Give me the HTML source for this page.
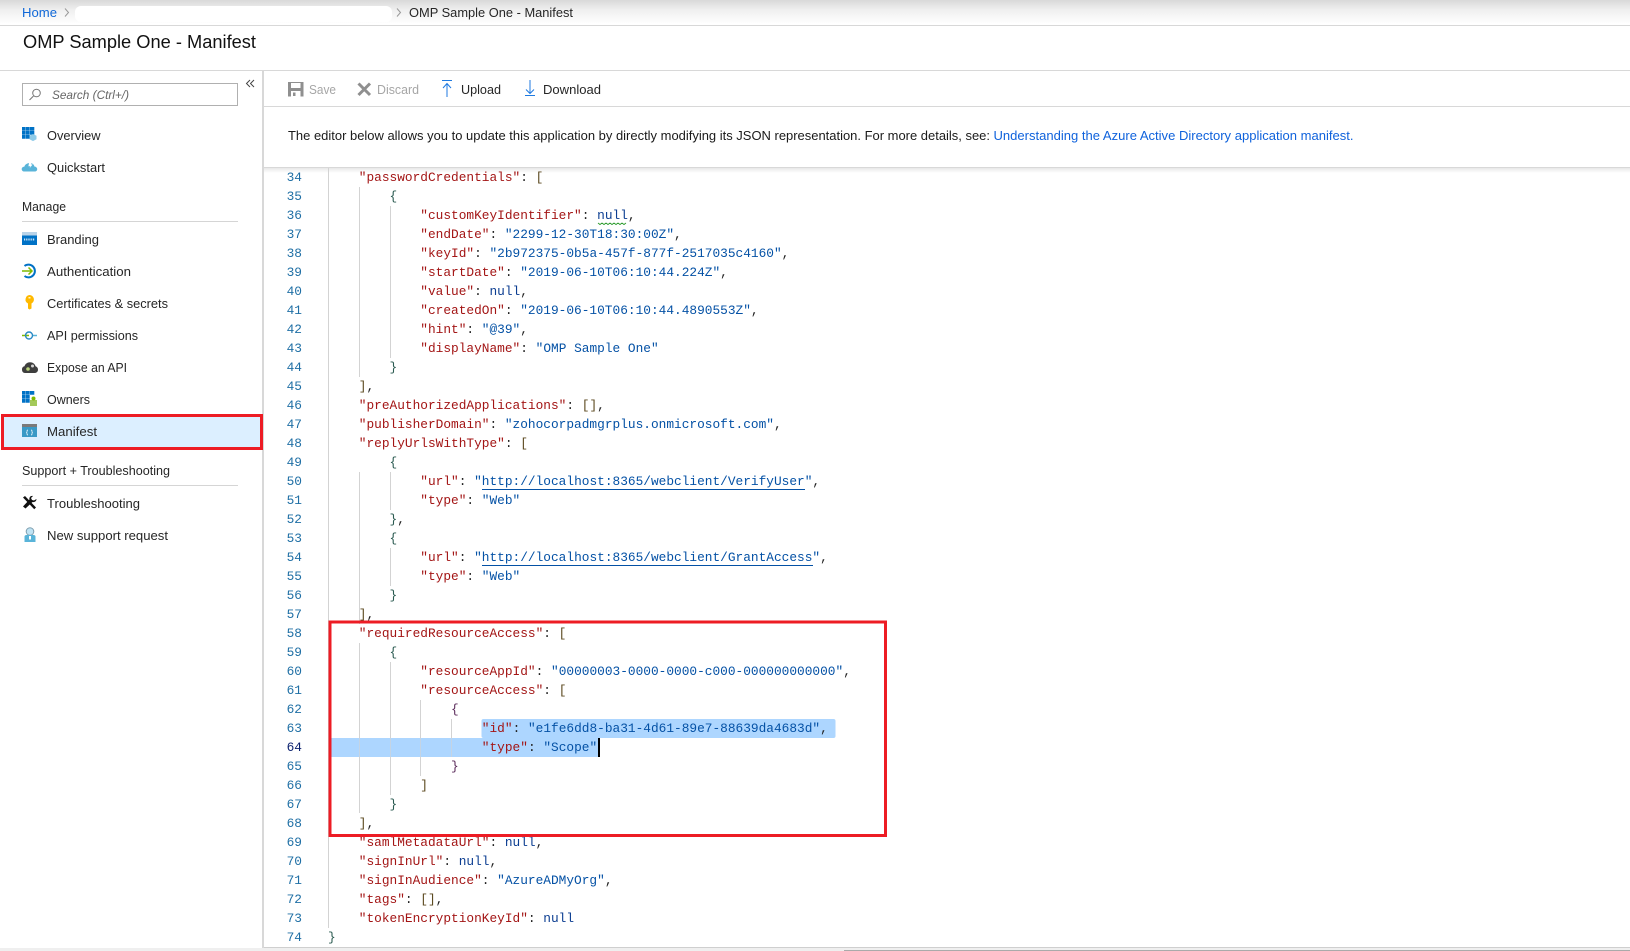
<!DOCTYPE html>
<html lang="en">
<head>
<meta charset="utf-8">
<title>OMP Sample One - Manifest</title>
<style>
html,body{margin:0;padding:0;background:#fff;width:1630px;height:951px;overflow:hidden}
svg{display:block}
.u{font-family:"Liberation Sans",sans-serif;font-size:13px;fill:#262626}
.m{font-family:"Liberation Mono",monospace;font-size:12.82px;fill:#222}
.ln{font-family:"Liberation Mono",monospace;font-size:12.82px;fill:#1f6fa5;text-anchor:end}
.k{fill:#a31515}.s{fill:#0451a5}.n{fill:#0b3d91}
.b1{fill:#5c4a20}.b2{fill:#2a5a50}.b3{fill:#5a2a5a}
</style>
</head>
<body>
<svg xmlns="http://www.w3.org/2000/svg" width="1630" height="951" viewBox="0 0 1630 951">
<defs>
<linearGradient id="tg" x1="0" y1="0" x2="0" y2="1"><stop offset="0" stop-color="#d9d9d9"/><stop offset=".4" stop-color="#efefef"/><stop offset="1" stop-color="#fff"/></linearGradient>
<linearGradient id="sh" x1="0" y1="0" x2="0" y2="1"><stop offset="0" stop-color="#e8e8e8"/><stop offset="1" stop-color="#fff"/></linearGradient>
</defs>
<rect width="1630" height="951" fill="#fff"/>
<!-- top bar -->
<rect width="1630" height="24" fill="url(#tg)"/>
<rect x="0" y="25" width="1630" height="1" fill="#d8d8d8"/>
<rect x="75" y="6" width="317" height="16" rx="6" fill="#fff"/>
<text class="u" x="22" y="17" textLength="35" lengthAdjust="spacingAndGlyphs" style="fill:#1068d8">Home</text>
<path d="M65 8.500l3.500 4-3.500 4" fill="none" stroke="#999" stroke-width="1"/>
<path d="M397 8.500l3.500 4-3.500 4" fill="none" stroke="#999" stroke-width="1"/>
<text class="u" x="409" y="17" textLength="164" lengthAdjust="spacingAndGlyphs">OMP Sample One - Manifest</text>
<text x="23" y="48" textLength="233" lengthAdjust="spacingAndGlyphs" style="font-family:'Liberation Sans',sans-serif;font-size:18px;fill:#111">OMP Sample One - Manifest</text>
<rect x="0" y="70" width="1630" height="1" fill="#d8d8d8"/>
<!-- sidebar -->
<rect x="262" y="70" width="2" height="881" fill="#d8d8d8"/>
<rect x="22.500" y="83.500" width="215" height="22" fill="#fff" stroke="#b0b0b0"/>
<circle cx="36.500" cy="93" r="3.800" fill="none" stroke="#777" stroke-width="1"/>
<path d="M33.500 96l-4 4" stroke="#777" stroke-width="1.100"/>
<text class="u" x="52" y="99" textLength="77" lengthAdjust="spacingAndGlyphs" style="font-style:italic;font-size:12px;fill:#666">Search (Ctrl+/)</text>
<path d="M250 80l-3.500 3.500 3.500 3.500M254 80l-3.500 3.500 3.500 3.500" fill="none" stroke="#444" stroke-width="1"/>
<!-- overview icon -->
<path d="M22 127h3.700v3.700h-3.700zM26 127h3.700v3.700h-3.700zM30 127h4.300v3.700h-4.300zM22 131h3.700v3.700h-3.700zM26 131h3.700v3.700h-3.700zM30 131h4.300v3.700h-4.300zM22 135h3.700v3.700h-3.700zM26 135h3.700v3.700h-3.700z" fill="#0072c6"/>
<path d="M33 134l3.500 1.800v3.500l-3.500 1.800-3.500-1.800v-3.500z" fill="#8fcbe8"/>
<text class="u" x="47" y="140" textLength="53.500" lengthAdjust="spacingAndGlyphs">Overview</text>
<!-- quickstart -->
<path d="M24.500 171.500c-2 0-2.800-1.200-2.800-2.400 0-1.400 1.100-2.400 2.600-2.400.6-2 2.400-3.300 4.700-3.700l-.6 3.300h2l-.8 2 3-3.800-1.800-.2.600-1c1.800.4 2.700 1.800 3 3.200 1.600.2 2.800 1.200 2.800 2.700 0 1.300-1 2.300-2.500 2.300z" fill="#59b4d9"/>
<text class="u" x="47" y="172" textLength="58" lengthAdjust="spacingAndGlyphs">Quickstart</text>
<text class="u" x="22" y="211" textLength="44" lengthAdjust="spacingAndGlyphs">Manage</text>
<rect x="22" y="221" width="216" height="1" fill="#d5d5d5"/>
<!-- branding -->
<rect x="22" y="232" width="15" height="13" fill="#0072c6"/>
<rect x="22" y="232" width="15" height="3.500" fill="#b9d3e8"/>
<path d="M24 239.500h11" stroke="#d0e6f6" stroke-width="2" stroke-dasharray="1 .8"/>
<text class="u" x="47" y="244" textLength="52" lengthAdjust="spacingAndGlyphs">Branding</text>
<!-- authentication -->
<path d="M24.500 266a6.400 6.400 0 1 1 0 10" fill="none" stroke="#0072c6" stroke-width="2"/>
<path d="M22 271h10M28.500 267.500l3.500 3.500-3.500 3.500" fill="none" stroke="#7fba00" stroke-width="1.500"/>
<text class="u" x="47" y="276" textLength="84" lengthAdjust="spacingAndGlyphs">Authentication</text>
<!-- certificates -->
<path d="M29.500 295a4.500 4.500 0 0 1 2 8.500v5l-2 1-1.500-1v-5a4.500 4.500 0 0 1 1.500-8.500z" fill="#ffb900"/>
<rect x="28.500" y="297" width="2" height="1.500" fill="#fff2c4"/>
<text class="u" x="47" y="308" textLength="121" lengthAdjust="spacingAndGlyphs">Certificates &amp; secrets</text>
<!-- api -->
<path d="M22 335.500h5" stroke="#7fba00" stroke-width="1.500"/>
<path d="M32 335.500h5" stroke="#59b4d9" stroke-width="1.500"/>
<path d="M26 335.500h3" stroke="#7fba00" stroke-width="1.500"/>
<circle cx="29" cy="335.500" r="3.500" fill="none" stroke="#2b8ac6" stroke-width="1.400"/>
<text class="u" x="47" y="340" textLength="91" lengthAdjust="spacingAndGlyphs">API permissions</text>
<!-- expose -->
<path d="M25 373c-2 0-3-1.500-3-3.500 0-1.800 1-3 2.500-3.200.7-2.500 3-4 5.500-4 2.700 0 5 1.700 5.500 4 1.500.5 2.500 1.700 2.500 3.300 0 2-1.500 3.400-3.500 3.400z" fill="#3e3e3e"/>
<circle cx="28" cy="369" r="1.800" fill="#b8d27a"/><circle cx="32.500" cy="366" r="1.500" fill="#d5d5d5"/>
<text class="u" x="47" y="372" textLength="80" lengthAdjust="spacingAndGlyphs">Expose an API</text>
<!-- owners -->
<path d="M22 391h3.700v3.700h-3.700zM26 391h3.700v3.700h-3.700zM30 391h4.300v3.700h-4.300zM22 395h3.700v3.700h-3.700zM26 395h3.700v3.700h-3.700zM22 399h3.700v3.700h-3.700zM26 399h3.700v3.700h-3.700z" fill="#0072c6"/>
<rect x="30" y="400" width="7" height="6" fill="#a4c95a"/>
<circle cx="33.500" cy="398.500" r="2" fill="#7fba00"/>
<text class="u" x="47" y="404" textLength="43" lengthAdjust="spacingAndGlyphs">Owners</text>
<!-- manifest selected -->
<rect x="3" y="416" width="258" height="32" fill="#dcefff"/>
<rect x="22" y="424" width="15" height="13" fill="#3999c6"/>
<rect x="22" y="424" width="15" height="3" fill="#7a7a7a"/>
<path d="M28 430c-1 0-1 .5-1 1v1c0 .5-.5.700-.8.700.3 0 .8.300.8.800v.5c0 .5 0 1 1 1M31 430c1 0 1 .5 1 1v1c0 .5.5.700.8.700-.3 0-.8.300-.8.800v.5c0 .5 0 1-1 1" fill="none" stroke="#fff" stroke-width=".7"/>
<text class="u" x="47" y="436" textLength="50" lengthAdjust="spacingAndGlyphs">Manifest</text>
<rect x="2.500" y="415.500" width="259" height="33" fill="none" stroke="#ed1c24" stroke-width="3"/>
<text class="u" x="22" y="475" textLength="148" lengthAdjust="spacingAndGlyphs">Support + Troubleshooting</text>
<rect x="22" y="485" width="216" height="1" fill="#d5d5d5"/>
<!-- troubleshooting -->
<path d="M23 497.500l2-1.500 11 11.500-1.800 1.700z" fill="#111"/>
<path d="M36.500 499c0 2-2 3.500-4 3l-7 6.500-2.500-2 6.500-7c-.5-2 1-4 3.500-3.500l-2 2 1 2 2 .500z" fill="#111"/>
<text class="u" x="47" y="508" textLength="93" lengthAdjust="spacingAndGlyphs">Troubleshooting</text>
<!-- new support -->
<circle cx="30" cy="531.500" r="3.800" fill="#bfe3f4" stroke="#7f9fb0" stroke-width="1"/>
<path d="M24.500 542v-5.500c0-1 1-1.500 2-1.500h7c1 0 2 .5 2 1.500v5.500z" fill="#59b4d9"/>
<rect x="29" y="536" width="2" height="3.500" fill="#fff"/>
<text class="u" x="47" y="540" textLength="121" lengthAdjust="spacingAndGlyphs">New support request</text>
<!-- toolbar -->
<path d="M288 82h15.500v14.500H288z" fill="#8f8f8f"/>
<rect x="291" y="83" width="9.500" height="5" fill="#fff"/>
<rect x="291" y="91" width="9.500" height="5.500" fill="#fff"/>
<rect x="293" y="92.500" width="2.500" height="3.500" fill="#8f8f8f"/>
<text class="u" x="309" y="94" textLength="27" lengthAdjust="spacingAndGlyphs" style="fill:#a6a6a6">Save</text>
<path d="M358.500 83.500l11.500 11.500M370 83.500l-11.500 11.500" stroke="#8f8f8f" stroke-width="3"/>
<text class="u" x="377" y="94" textLength="42" lengthAdjust="spacingAndGlyphs" style="fill:#a6a6a6">Discard</text>
<path d="M442 80.500h10M447 84v13M443 88l4-4.500 4 4.500" fill="none" stroke="#1f7ae0" stroke-width="1"/>
<text class="u" x="461" y="94" textLength="40" lengthAdjust="spacingAndGlyphs">Upload</text>
<path d="M525 95.500h10M530 80v13M526 89.500l4 4 4-4" fill="none" stroke="#1f7ae0" stroke-width="1"/>
<text class="u" x="543" y="94" textLength="58" lengthAdjust="spacingAndGlyphs">Download</text>
<rect x="264" y="106" width="1366" height="1" fill="#d8d8d8"/>
<!-- description -->
<text class="u" x="288" y="140" textLength="702" lengthAdjust="spacingAndGlyphs" style="fill:#1a1a1a">The editor below allows you to update this application by directly modifying its JSON representation. For more details, see:</text>
<text class="u" x="993.500" y="140" textLength="360" lengthAdjust="spacingAndGlyphs" style="fill:#0f62dc">Understanding the Azure Active Directory application manifest.</text>
<rect x="264" y="167" width="1366" height="1" fill="#d8d8d8"/>
<rect x="264" y="168" width="1366" height="5" fill="url(#sh)"/>
<!-- guides -->
<g fill="#d3d3d3">
<rect x="328" y="168" width="1" height="760"/>
<rect x="359" y="187" width="1" height="190"/>
<rect x="359" y="472" width="1" height="152"/>
<rect x="359" y="643" width="1" height="170"/>
<rect x="390" y="206" width="1" height="152"/>
<rect x="390" y="472" width="1" height="38"/>
<rect x="390" y="548" width="1" height="38"/>
<rect x="390" y="662" width="1" height="133"/>
<rect x="420" y="700" width="1" height="76"/>
</g>
<!-- selection -->
<rect x="481.500" y="719" width="354" height="19" rx="2" fill="#add6ff"/>
<rect x="330.500" y="738" width="267.500" height="19" fill="#add6ff"/>
<rect x="451" y="719" width="1" height="38" fill="#d3d3d3"/>
<rect x="359" y="738" width="1" height="19" fill="#c4d4e4"/>
<rect x="390" y="738" width="1" height="19" fill="#c4d4e4"/>
<rect x="420" y="738" width="1" height="19" fill="#c4d4e4"/>
<rect x="451" y="738" width="1" height="19" fill="#c4d4e4"/>
<rect x="598" y="738" width="2" height="19" fill="#000"/>
<g transform="translate(0,-1)">
<!-- line numbers -->
<text class="ln" x="302" y="182">34</text><text class="ln" x="302" y="201">35</text><text class="ln" x="302" y="220">36</text><text class="ln" x="302" y="239">37</text><text class="ln" x="302" y="258">38</text><text class="ln" x="302" y="277">39</text><text class="ln" x="302" y="296">40</text><text class="ln" x="302" y="315">41</text><text class="ln" x="302" y="334">42</text><text class="ln" x="302" y="353">43</text><text class="ln" x="302" y="372">44</text><text class="ln" x="302" y="391">45</text><text class="ln" x="302" y="410">46</text><text class="ln" x="302" y="429">47</text><text class="ln" x="302" y="448">48</text><text class="ln" x="302" y="467">49</text><text class="ln" x="302" y="486">50</text><text class="ln" x="302" y="505">51</text><text class="ln" x="302" y="524">52</text><text class="ln" x="302" y="543">53</text><text class="ln" x="302" y="562">54</text><text class="ln" x="302" y="581">55</text><text class="ln" x="302" y="600">56</text><text class="ln" x="302" y="619">57</text><text class="ln" x="302" y="638">58</text><text class="ln" x="302" y="657">59</text><text class="ln" x="302" y="676">60</text><text class="ln" x="302" y="695">61</text><text class="ln" x="302" y="714">62</text><text class="ln" x="302" y="733">63</text><text class="ln" x="302" y="752" style="fill:#0b216f">64</text><text class="ln" x="302" y="771">65</text><text class="ln" x="302" y="790">66</text><text class="ln" x="302" y="809">67</text><text class="ln" x="302" y="828">68</text><text class="ln" x="302" y="847">69</text><text class="ln" x="302" y="866">70</text><text class="ln" x="302" y="885">71</text><text class="ln" x="302" y="904">72</text><text class="ln" x="302" y="923">73</text><text class="ln" x="302" y="942">74</text>
<!-- code -->
<g class="m" xml:space="preserve">
<text class="m" x="358.760" y="182"><tspan class="k">"passwordCredentials"</tspan>: <tspan class="b1">[</tspan></text>
<text class="m b2" x="389.520" y="201">{</text>
<text class="m" x="420.280" y="220"><tspan class="k">"customKeyIdentifier"</tspan>: <tspan class="n">null</tspan>,</text>
<text class="m" x="420.280" y="239"><tspan class="k">"endDate"</tspan>: <tspan class="s">"2299-12-30T18:30:00Z"</tspan>,</text>
<text class="m" x="420.280" y="258"><tspan class="k">"keyId"</tspan>: <tspan class="s">"2b972375-0b5a-457f-877f-2517035c4160"</tspan>,</text>
<text class="m" x="420.280" y="277"><tspan class="k">"startDate"</tspan>: <tspan class="s">"2019-06-10T06:10:44.224Z"</tspan>,</text>
<text class="m" x="420.280" y="296"><tspan class="k">"value"</tspan>: <tspan class="n">null</tspan>,</text>
<text class="m" x="420.280" y="315"><tspan class="k">"createdOn"</tspan>: <tspan class="s">"2019-06-10T06:10:44.4890553Z"</tspan>,</text>
<text class="m" x="420.280" y="334"><tspan class="k">"hint"</tspan>: <tspan class="s">"@39"</tspan>,</text>
<text class="m" x="420.280" y="353"><tspan class="k">"displayName"</tspan>: <tspan class="s">"OMP Sample One"</tspan></text>
<text class="m b2" x="389.520" y="372">}</text>
<text class="m" x="358.760" y="391"><tspan class="b1">]</tspan>,</text>
<text class="m" x="358.760" y="410"><tspan class="k">"preAuthorizedApplications"</tspan>: <tspan class="b1">[]</tspan>,</text>
<text class="m" x="358.760" y="429"><tspan class="k">"publisherDomain"</tspan>: <tspan class="s">"zohocorpadmgrplus.onmicrosoft.com"</tspan>,</text>
<text class="m" x="358.760" y="448"><tspan class="k">"replyUrlsWithType"</tspan>: <tspan class="b1">[</tspan></text>
<text class="m b2" x="389.520" y="467">{</text>
<text class="m" x="420.280" y="486"><tspan class="k">"url"</tspan>: <tspan class="s">"http://localhost:8365/webclient/VerifyUser"</tspan>,</text>
<text class="m" x="420.280" y="505"><tspan class="k">"type"</tspan>: <tspan class="s">"Web"</tspan></text>
<text class="m" x="389.520" y="524"><tspan class="b2">}</tspan>,</text>
<text class="m b2" x="389.520" y="543">{</text>
<text class="m" x="420.280" y="562"><tspan class="k">"url"</tspan>: <tspan class="s">"http://localhost:8365/webclient/GrantAccess"</tspan>,</text>
<text class="m" x="420.280" y="581"><tspan class="k">"type"</tspan>: <tspan class="s">"Web"</tspan></text>
<text class="m b2" x="389.520" y="600">}</text>
<text class="m" x="358.760" y="619"><tspan class="b1">]</tspan>,</text>
<text class="m" x="358.760" y="638"><tspan class="k">"requiredResourceAccess"</tspan>: <tspan class="b1">[</tspan></text>
<text class="m b2" x="389.520" y="657">{</text>
<text class="m" x="420.280" y="676"><tspan class="k">"resourceAppId"</tspan>: <tspan class="s">"00000003-0000-0000-c000-000000000000"</tspan>,</text>
<text class="m" x="420.280" y="695"><tspan class="k">"resourceAccess"</tspan>: <tspan class="b1">[</tspan></text>
<text class="m b3" x="451.040" y="714">{</text>
<text class="m" x="481.800" y="733"><tspan class="k">"id"</tspan>: <tspan class="s">"e1fe6dd8-ba31-4d61-89e7-88639da4683d"</tspan>,</text>
<text class="m" x="481.800" y="752"><tspan class="k">"type"</tspan>: <tspan class="s">"Scope"</tspan></text>
<text class="m b3" x="451.040" y="771">}</text>
<text class="m b1" x="420.280" y="790">]</text>
<text class="m b2" x="389.520" y="809">}</text>
<text class="m" x="358.760" y="828"><tspan class="b1">]</tspan>,</text>
<text class="m" x="358.760" y="847"><tspan class="k">"samlMetadataUrl"</tspan>: <tspan class="n">null</tspan>,</text>
<text class="m" x="358.760" y="866"><tspan class="k">"signInUrl"</tspan>: <tspan class="n">null</tspan>,</text>
<text class="m" x="358.760" y="885"><tspan class="k">"signInAudience"</tspan>: <tspan class="s">"AzureADMyOrg"</tspan>,</text>
<text class="m" x="358.760" y="904"><tspan class="k">"tags"</tspan>: <tspan class="b1">[]</tspan>,</text>
<text class="m" x="358.760" y="923"><tspan class="k">"tokenEncryptionKeyId"</tspan>: <tspan class="n">null</tspan></text>
<text class="m b2" x="328" y="942">}</text>
</g>
</g>
<!-- link underlines -->
<rect x="482" y="489" width="323" height="1" fill="#0451a5"/>
<rect x="482" y="565" width="331" height="1" fill="#0451a5"/>
<!-- squiggle -->
<path d="M598 223l2 1.500 2-1.500 2 1.500 2-1.500 2 1.500 2-1.500 2 1.500 2-1.500 2 1.500 2-1.500 2 1.500 2-1.500 2 1.500 2-1.500" fill="none" stroke="#2a9a2a" stroke-width=".9"/>
<!-- red box -->
<rect x="330" y="622" width="555.500" height="213.500" fill="none" stroke="#ed1c24" stroke-width="3"/>
<!-- bottom -->
<rect x="264" y="947" width="1366" height="1" fill="#cfcfcf"/>
<rect x="0" y="948" width="1630" height="3" fill="#efefef"/>
<rect x="844" y="950" width="786" height="1" fill="#aaa"/>
</svg>
</body>
</html>
